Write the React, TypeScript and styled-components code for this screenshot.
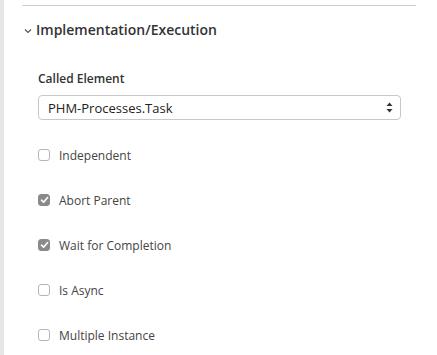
import React from "react";
import styled, {createGlobalStyle} from "styled-components";

const GlobalStyle = createGlobalStyle`
  html, body {
    margin: 0;
    padding: 0;
    background: #fff;
  }
  body {
    font-family: "Open Sans", "Noto Sans", sans-serif;
    color: #333;
  }
`

const options = [
    {label: "Independent", checked: false},
    {label: "Abort Parent", checked: true},
    {label: "Wait for Completion", checked: true},
    {label: "Is Async", checked: false},
    {label: "Multiple Instance", checked: false},
]

const Check: React.FC<{ checked: boolean }> = ({checked}) =>
    <Box checked={checked}>
        {checked && <svg width="9" height="8" viewBox="0 0 9 8">
            <path d="M1.5 4.2 L3.6 6.2 L7.6 1.6" fill="none" stroke="#fff" strokeWidth="1.6"
                  strokeLinecap="round" strokeLinejoin="round"/>
        </svg>}
    </Box>

export default function App() {
    return <>
        <GlobalStyle/>
        <Page>
            <SideStrip/>
            <Panel>
                <Divider/>
                <SectionHeader>
                    <Chevron width="8" height="6" viewBox="0 0 8 6">
                        <path d="M1 1.5 L4 4.5 L7 1.5" fill="none" stroke="#555" strokeWidth="1.2"/>
                    </Chevron>
                    Implementation/Execution
                </SectionHeader>
                <Body>
                    <Field>
                        <Label>Called Element</Label>
                        <Select>
                            <span>PHM-Processes.Task</span>
                            <svg width="7" height="11" viewBox="0 0 7 11">
                                <path d="M3.5 0.5 L6.5 4 L0.5 4 Z" fill="#333"/>
                                <path d="M3.5 10.5 L6.5 7 L0.5 7 Z" fill="#333"/>
                            </svg>
                        </Select>
                    </Field>
                    <CheckList>
                        {options.map(o =>
                            <CheckRow key={o.label}>
                                <Check checked={o.checked}/>
                                {o.label}
                            </CheckRow>)}
                    </CheckList>
                </Body>
            </Panel>
        </Page>
    </>
}

const Page = styled.div`
  display: flex;
  width: 437px;
  height: 355px;
  overflow: hidden;
`

const SideStrip = styled.div`
  width: 4px;
  background: #e6e6e6;
  flex-shrink: 0;
`

const Panel = styled.div`
  flex: 1;
  padding: 5px 21px 0 18px;
`

const Divider = styled.div`
  height: 1px;
  background: #cfcfcf;
`

const SectionHeader = styled.div`
  display: flex;
  align-items: center;
  margin-top: 14px;
  font-size: 14px;
  font-weight: 600;
  color: #333;
  line-height: 20px;
`

const Chevron = styled.svg`
  margin: 1px 4px 0 2px;
`

const Body = styled.div`
  padding: 31px 15px 0 16px;
`

const Field = styled.div`
  display: flex;
  flex-direction: column;
`

const Label = styled.div`
  font-size: 12px;
  font-weight: 600;
  color: #333;
  line-height: 16px;
`

const Select = styled.div`
  margin-top: 8px;
  height: 25px;
  box-sizing: border-box;
  border: 1px solid #c8c8c8;
  border-radius: 4px;
  display: flex;
  align-items: center;
  justify-content: space-between;
  padding: 0 7px 0 9px;
  font-size: 13px;
  color: #222;
`

const CheckList = styled.div`
  display: flex;
  flex-direction: column;
  gap: 27px;
  margin-top: 26px;
`

const CheckRow = styled.label`
  display: flex;
  align-items: center;
  gap: 9px;
  font-size: 12px;
  color: #444;
  height: 18px;
`

const Box = styled.span<{ checked: boolean }>`
  width: 12px;
  height: 12px;
  box-sizing: border-box;
  border-radius: 3px;
  display: inline-flex;
  align-items: center;
  justify-content: center;
  border: 1px solid ${p => p.checked ? "#8a8a8a" : "#b5b5b5"};
  background: ${p => p.checked ? "#8a8a8a" : "#fff"};
`
